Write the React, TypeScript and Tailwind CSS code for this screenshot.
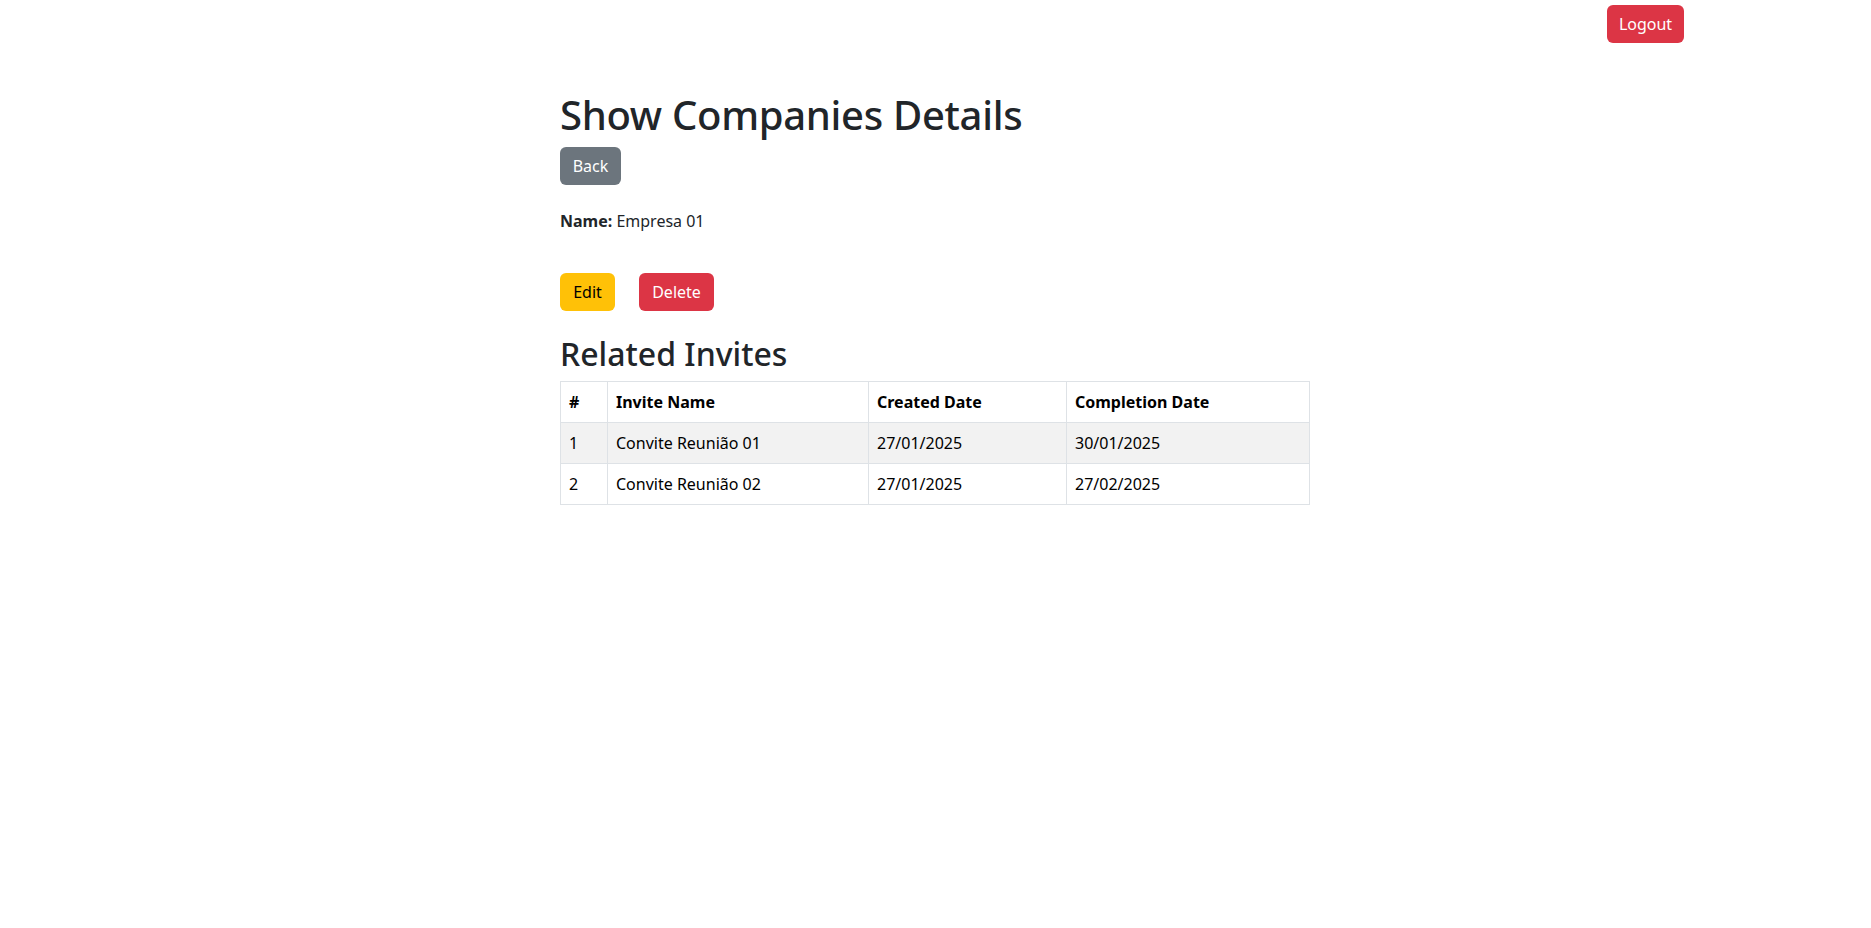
import React from 'react';

interface Invite {
  id: number;
  name: string;
  created: string;
  completion: string;
}

const invites: Invite[] = [
  { id: 1, name: 'Convite Reunião 01', created: '27/01/2025', completion: '30/01/2025' },
  { id: 2, name: 'Convite Reunião 02', created: '27/01/2025', completion: '27/02/2025' },
];

const btn = 'inline-flex items-center justify-center h-[38px] rounded-[6px] text-[16px] leading-6';
const cell = 'border border-[#dee2e6] px-2 py-2 text-left';

export default function App() {
  return (
    <div className="min-h-screen bg-white text-[#212529] font-['Noto_Sans',sans-serif] text-[16px] leading-6">
      {/* top bar */}
      <div className="flex justify-end pt-[5px] pr-[187px]">
        <button className={`${btn} w-[77px] bg-[#dc3545] text-white`}>Logout</button>
      </div>

      <div className="w-[750px] ml-[560px]">
        <h1 className="mt-[48px] h-[48px] text-[40px] leading-[48px] font-medium tracking-[-0.3px]">
          Show Companies Details
        </h1>
        <div className="mt-[8px]">
          <button className={`${btn} w-[61px] bg-[#6c757d] text-white`}>Back</button>
        </div>

        <p className="mt-[24px] h-6">
          <strong className="font-bold">Name:</strong> Empresa 01
        </p>

        <div className="mt-[40px] flex gap-6">
          <button className={`${btn} w-[55px] bg-[#ffc107] text-black`}>Edit</button>
          <button className={`${btn} w-[75px] bg-[#dc3545] text-white`}>Delete</button>
        </div>

        <h2 className="mt-[24px] h-[38px] text-[32px] leading-[38px] font-medium">Related Invites</h2>

        <table className="mt-[8px] w-[750px] table-fixed border-collapse border border-[#dee2e6] text-black">
          <thead>
            <tr className="h-[41px]">
              <th className={`${cell} w-[47px] font-bold`}>#</th>
              <th className={`${cell} w-[261px] font-bold`}>Invite Name</th>
              <th className={`${cell} w-[198px] font-bold`}>Created Date</th>
              <th className={`${cell} font-bold`}>Completion Date</th>
            </tr>
          </thead>
          <tbody>
            {invites.map((inv, i) => (
              <tr key={inv.id} className={`h-[41px] ${i % 2 === 0 ? 'bg-[#f2f2f2]' : 'bg-white'}`}>
                <td className={cell}>{inv.id}</td>
                <td className={cell}>{inv.name}</td>
                <td className={cell}>{inv.created}</td>
                <td className={cell}>{inv.completion}</td>
              </tr>
            ))}
          </tbody>
        </table>
      </div>
    </div>
  );
}
